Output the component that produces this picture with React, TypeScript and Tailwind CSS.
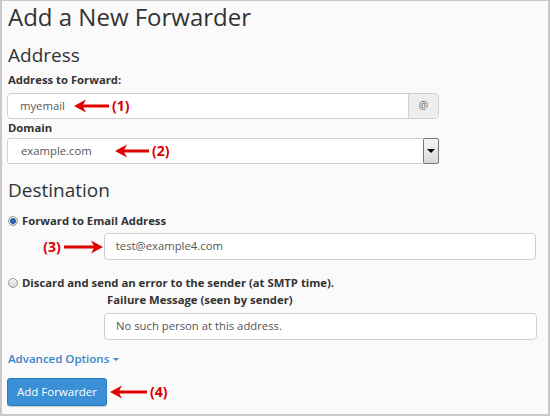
import React from "react"

function Arrow({ dir, len, label }: { dir: "left" | "right"; len: number; label: string }) {
  const w = len
  return (
    <div className="flex items-center gap-[3px]">
      {dir === "right" && <span className="text-[14px] leading-[16px] font-bold text-[#d90000]">{label}</span>}
      <svg width={w} height={16} viewBox={`0 0 ${w} 16`}>
        {dir === "left" ? (
          <>
            <line x1={8} y1={8} x2={w} y2={8} stroke="#e00000" strokeWidth={3} />
            <polygon points="0,8 12,1.5 8.5,8 12,14.5" fill="#e00000" />
          </>
        ) : (
          <>
            <line x1={0} y1={8} x2={w - 8} y2={8} stroke="#e00000" strokeWidth={3} />
            <polygon points={`${w},8 ${w - 12},1.5 ${w - 8.5},8 ${w - 12},14.5`} fill="#e00000" />
          </>
        )}
      </svg>
      {dir === "left" && <span className="text-[14px] leading-[16px] font-bold text-[#d90000]">{label}</span>}
    </div>
  )
}

function Radio({ checked }: { checked?: boolean }) {
  return (
    <span className="w-[10px] h-[10px] rounded-full border border-[#9a9a9a] bg-gradient-to-b from-[#f4f4f4] to-[#d6d6d6] flex items-center justify-center shrink-0">
      {checked && <span className="w-[6px] h-[6px] rounded-full bg-[#2a6bb8] border border-[#1d4f8c]" />}
    </span>
  )
}

export default function App() {
  return (
    <div
      className="w-[550px] h-[416px] bg-[#fafafa] border-l-2 border-r-2 border-b-2 border-t border-[#c9c9c9] text-[#333] pl-[5px] pr-[12px]"
      style={{ fontFamily: "'Open Sans', 'Noto Sans', sans-serif" }}
    >
      <h1 className="text-[24px] leading-[30px] mt-[1px] ml-[1px] text-[#333]">Add a New Forwarder</h1>

      <h2 className="text-[19px] leading-[24px] mt-[11px] ml-[1px]">Address</h2>
      <div className="text-[11.3px] font-bold leading-[16px] mt-[5px] ml-[1px]">Address to Forward:</div>
      <div className="relative mt-[5px] w-[432px] h-[26px] flex border border-[#cfcfcf] rounded-[4px] bg-white">
        <div className="flex-1 flex items-center pl-[12px] text-[11.3px] text-[#555]">myemail</div>
        <div className="w-[30px] flex items-center justify-center bg-[#eeeeee] border-l border-[#cfcfcf] rounded-r-[4px] text-[10.5px] text-[#666]">@</div>
        <div className="absolute left-[66px] top-[4px]">
          <Arrow dir="left" len={35} label="(1)" />
        </div>
      </div>

      <div className="text-[11.3px] font-bold leading-[16px] mt-[1px] ml-[1px]">Domain</div>
      <div className="relative mt-[2px] w-[432px] h-[26px] flex border border-[#cfcfcf] rounded-[3px] bg-white">
        <div className="flex-1 flex items-center pl-[13px] text-[11.3px] text-[#555]">example.com</div>
        <div className="w-[16px] my-[-1px] mr-[-1px] flex items-center justify-center bg-gradient-to-b from-[#f6f6f6] to-[#d9d9d9] border border-[#777] rounded-[2px]">
          <span className="w-0 h-0 border-l-[4px] border-r-[4px] border-t-[4px] border-l-transparent border-r-transparent border-t-black" />
        </div>
        <div className="absolute left-[107px] top-[4px]">
          <Arrow dir="left" len={34} label="(2)" />
        </div>
      </div>

      <h2 className="text-[19px] leading-[24px] mt-[14px] ml-[1px]">Destination</h2>
      <div className="flex items-center gap-[4px] mt-[11px] ml-[1px] h-[16px]">
        <Radio checked />
        <span className="text-[11.3px] font-bold">Forward to Email Address</span>
      </div>
      <div className="flex items-center mt-[4px]">
        <div className="w-[97px] flex justify-end pr-[1px]">
          <Arrow dir="right" len={39} label="(3)" />
        </div>
        <div className="w-[433px] h-[27px] flex items-center pl-[11px] border border-[#cfcfcf] rounded-[4px] bg-white text-[11.3px] text-[#555]">test@example4.com</div>
      </div>

      <div className="flex items-center gap-[4px] mt-[15px] ml-[1px] h-[16px]">
        <Radio />
        <span className="text-[11.3px] font-bold">Discard and send an error to the sender (at SMTP time).</span>
      </div>
      <div className="text-[11.3px] font-bold leading-[16px] mt-[1px] ml-[100px]">Failure Message (seen by sender)</div>
      <div className="ml-[97px] mt-[5px] w-[433px] h-[27px] flex items-center pl-[11px] border border-[#cfcfcf] rounded-[4px] bg-white text-[11.3px] text-[#555]">No such person at this address.</div>

      <div className="flex items-center gap-[4px] mt-[10px] ml-[1px] text-[11.5px] font-semibold text-[#3a84c8] leading-[18px]">
        Advanced Options
        <span className="w-0 h-0 border-l-[3px] border-r-[3px] border-t-[3px] border-l-transparent border-r-transparent border-t-[#3a84c8] mt-[1px]" />
      </div>

      <div className="flex items-center gap-[3px] mt-[10px]">
        <button className="w-[100px] h-[28px] bg-[#3a8fd6] border border-[#2f7cc0] rounded-[3px] text-white text-[11.5px] shadow-[0_1px_1px_rgba(0,0,0,0.2)]">
          Add Forwarder
        </button>
        <Arrow dir="left" len={37} label="(4)" />
      </div>
    </div>
  )
}
